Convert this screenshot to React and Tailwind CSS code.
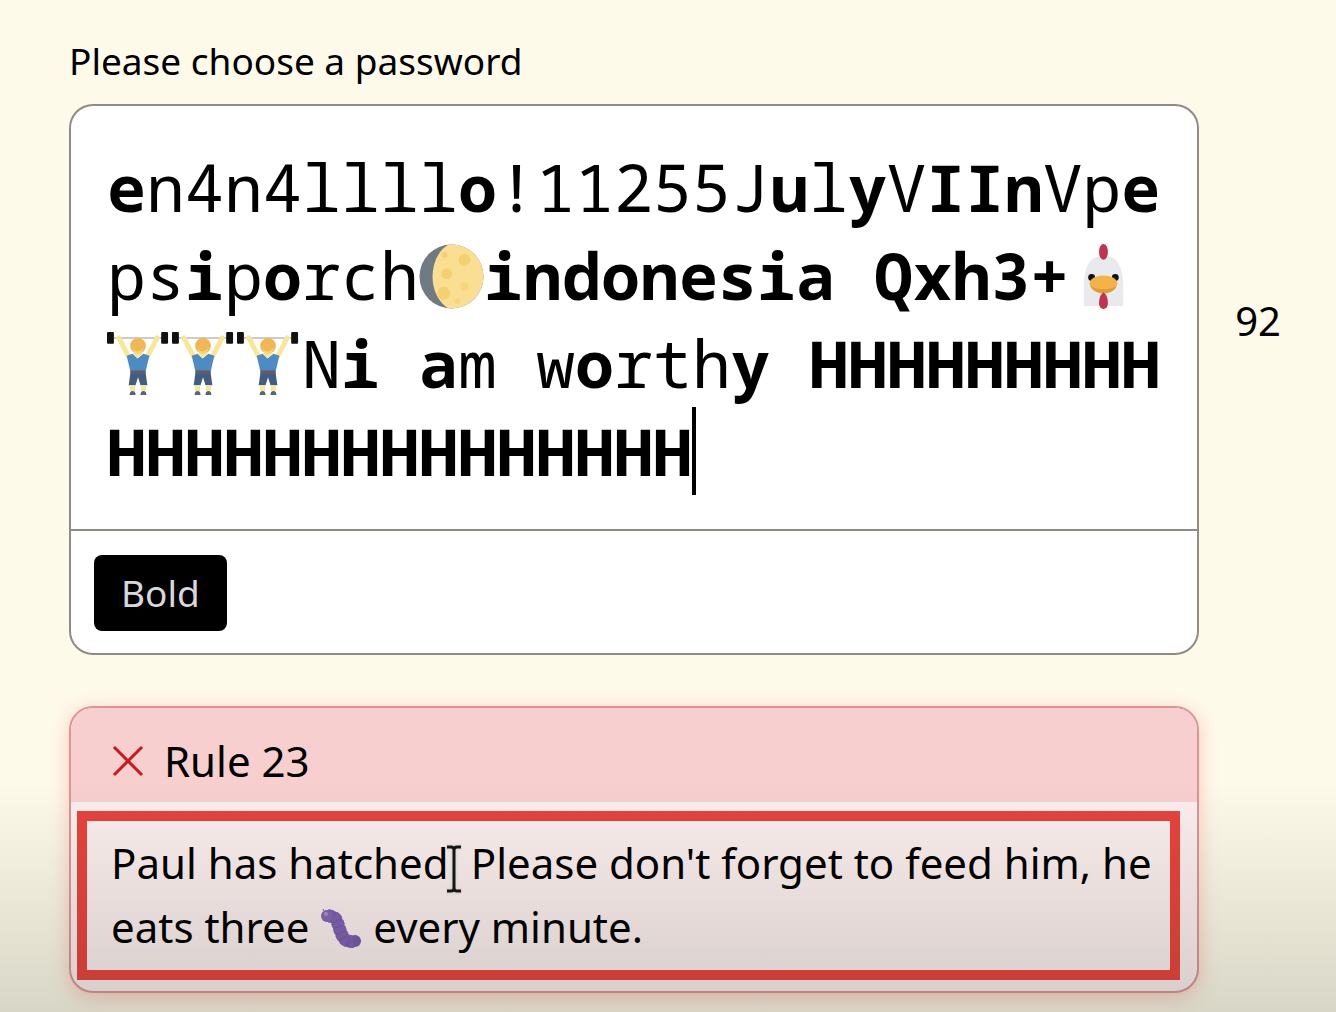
const SANS = "font-['Noto_Sans','Open_Sans',sans-serif]";

function Moon() {
  return (
    <svg role="img" aria-label="waxing gibbous moon" viewBox="0 0 66 66" className="inline-block h-[65px] w-[65px] align-[-9px]">
      <defs>
        <clipPath id="moon-disc">
          <circle cx="33" cy="33" r="32.500" />
        </clipPath>
      </defs>
      <g clipPath="url(#moon-disc)">
        <rect width="66" height="66" fill="#6f7a84" />
        <path d="M31 0C8 12 8 54 31 66H66V0Z" fill="#fade91" />
        <circle cx="46" cy="16" r="6" fill="#f5d06f" />
        <circle cx="28" cy="30" r="5.500" fill="#f5d06f" />
        <circle cx="25" cy="50" r="6.500" fill="#f5d06f" />
        <circle cx="46" cy="43" r="4" fill="#f7d57b" />
        <circle cx="26" cy="11" r="3" fill="#f5d06f" />
        <circle cx="39" cy="58" r="3" fill="#f7d57b" />
      </g>
    </svg>
  );
}

function Chicken() {
  return (
    <svg role="img" aria-label="chicken" viewBox="0 0 66 66" className="inline-block h-[65px] w-[65px] align-[-9px]">
      <path d="M15 63V45C15 26 19 12 35 12S55 26 55 45V63Z" fill="#e9eaed" />
      <ellipse cx="35" cy="8" rx="4.500" ry="8" fill="#c2334f" />
      <circle cx="23" cy="34" r="3.500" fill="#111" />
      <circle cx="47" cy="34" r="3.500" fill="#111" />
      <path d="M21 40C21 35 28 32 35 32S49 35 49 40S43 50 35 50S21 45 21 40Z" fill="#f4b347" />
      <path d="M22 43C28 47 42 47 48 43C46 48 41 50 35 50S24 48 22 43Z" fill="#e39a35" />
      <path d="M35 49C38 51 39.500 55 39.500 60C39.500 64 37.500 66 35 66S30.500 64 30.500 60C30.500 55 32 51 35 49Z" fill="#c2334f" />
    </svg>
  );
}

function Lifter() {
  return (
    <svg role="img" aria-label="weight lifter" viewBox="0 0 66 66" className="inline-block h-[65px] w-[65px] align-[-9px]">
      <path d="M6 6H60" stroke="#cfcbc8" strokeWidth="2" />
      <rect x="0" y="0" width="7" height="12" rx="1" fill="#111" />
      <rect x="55" y="0" width="7" height="12" rx="1" fill="#111" />
      <path d="M12 6L22 25M51 6L41 25" stroke="#f9e795" strokeWidth="5" strokeLinecap="round" fill="none" />
      <path d="M20 24L26 22L31 27L37 22L43 24L39 41H24Z" fill="#4d8bc4" />
      <path d="M26 21H37L31 27Z" fill="#f9e795" />
      <circle cx="31.500" cy="14" r="8" fill="#f2b755" />
      <path d="M26 17Q31 23 37 16Q36 22 31.500 22T26 17Z" fill="#f8d873" />
      <path d="M24 40H39L41 54H34L31.500 46L29 54H22Z" fill="#3e5e86" />
      <rect x="24" y="39" width="15" height="4" fill="#655a68" />
      <path d="M26 54V60M37 54V60" stroke="#f9e795" strokeWidth="5" />
      <path d="M23 64Q23 60 26 60T29 64ZM34 64Q34 60 37 60T40 64Z" fill="#52667c" />
    </svg>
  );
}

function Caterpillar() {
  return (
    <svg role="img" aria-label="caterpillar" viewBox="0 0 42 42" className="inline-block h-[42px] w-[42px] align-[-7px]">
      <path d="M8 8C18 8 17 15 20 22C23 31 26 35 35 33" fill="none" stroke="#7858ab" strokeWidth="12" strokeLinecap="round" />
      <path d="M8 8C18 8 17 15 20 22C23 31 26 35 35 33" fill="none" stroke="#8060b2" strokeWidth="13" strokeDasharray="4 2" />
      <circle cx="7" cy="8" r="6" fill="#8565b5" />
      <circle cx="6" cy="6" r="2" fill="#ab90cc" />
      <path d="M4 3L3 1M9 3L10 1" stroke="#7858ab" strokeWidth="1" />
    </svg>
  );
}

function TextCursor() {
  return (
    <svg aria-hidden="true" viewBox="0 0 20 54" className="pointer-events-none absolute left-1/2 top-[38px] h-[54px] w-[20px] -translate-x-1/2 -translate-y-1/2">
      <path d="M2 5H8L10 7L12 5H18M10 7V47M2 49H8L10 47L12 49H18" fill="none" stroke="#efe5e5" strokeWidth="7" />
      <path d="M3 5H7Q10 5 10 8Q10 5 13 5H17M10 7V47M3 49H7Q10 49 10 46Q10 49 13 49H17" fill="none" stroke="#151515" strokeWidth="3" />
    </svg>
  );
}

export default function App() {
  return (
    <main className={`relative min-h-screen bg-[#fefaea] pb-[19px] pl-[69px] pr-[55px] pt-[33px] text-black ${SANS}`}>
      <div id="password-label" className="text-[37px] leading-[56px]">Please choose a password</div>

      <div className="mt-[15px] grid grid-cols-[minmax(0,1fr)_auto] gap-x-9">
        <div className="rounded-t-3xl border-2 border-b-0 border-[#8f8c85] bg-white pb-[34px] pl-9 pr-8 pt-[37px]">
          <div
            role="textbox"
            aria-labelledby="password-label"
            contentEditable
            suppressContentEditableWarning
            spellCheck={false}
            className="break-all font-['Noto_Sans_Mono','DejaVu_Sans_Mono',monospace] text-[65px] leading-[88px] outline-none"
          >
            <b>e</b>n4n4llll<b>o</b>!11255J<b>u</b>l<b>y</b>V<b>IIn</b>Vp<b>e</b>ps<b>i</b>p<b>o</b>rch<Moon /><b>indonesia Qxh3+</b><Chicken /><Lifter /><Lifter /><Lifter />N<b>i</b> <b>a</b>m w<b>o</b>rth<b>y</b> <b>HHHHHHHHHHHHHHHHHHHHHHHH</b>
            <span className="inline-block h-[88px] w-[4px] bg-black align-top" />
          </div>
        </div>
        <output aria-label="Password length" className="self-center pt-2 text-[40px] leading-[56px]">92</output>

        <div className="col-start-1 rounded-b-3xl border-2 border-[#8f8c85] bg-white px-[23px] pb-[22px] pt-6">
          <button type="button" className="rounded-lg bg-black px-[27px] py-[10px] text-[37px] leading-[56px] text-[#d8d8d8]">Bold</button>
        </div>

        <section className="col-start-1 mt-[51px] overflow-hidden rounded-3xl border-2 border-[#dc9496] bg-[#fbeeee] shadow-[0_4px_20px_rgba(235,90,80,0.3)]">
          <h2 className="flex items-center gap-5 bg-[#f7cfce] px-[41px] pb-[13px] pt-[25px] text-[42px] leading-[56px]">
            <svg aria-hidden="true" viewBox="0 0 32 32" className="h-8 w-8">
              <path d="M2 2L30 30M30 2L2 30" stroke="#cc1818" strokeWidth="3" />
            </svg>
            Rule 23
          </h2>
          <div className="pb-[11px] pl-[6px] pr-[17px] pt-[9px]">
            <p className="border-[10px] border-[#e8423c] pb-[11px] pl-6 pr-2 pt-[10px] text-[42px] leading-[64px]">
              Paul has hatched<span className="relative inline-block">!<TextCursor /></span> Please don't forget to feed him, he eats three <Caterpillar /> every minute.
            </p>
          </div>
        </section>
      </div>

      <div aria-hidden="true" className="pointer-events-none absolute inset-x-0 bottom-0 h-[230px] bg-linear-to-b from-transparent to-[#202818]/17" />
    </main>
  );
}
